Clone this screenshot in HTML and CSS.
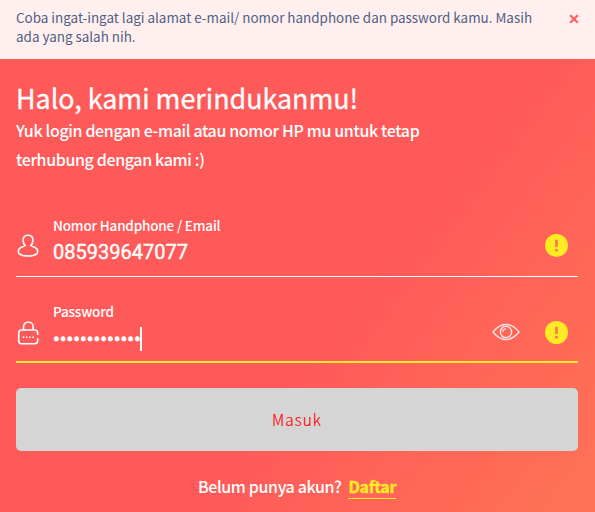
FILE: index.html
```html
<!DOCTYPE html>
<html lang="id">
<head>
<meta charset="utf-8">
<title>Login</title>
<link rel="stylesheet" href="styles.css">
</head>
<body>
<div class="alert">
  <p class="alert-text"><span>Coba ingat-ingat lagi alamat e-mail/ nomor handphone dan password kamu. Masih</span><br><span>ada yang salah nih.</span></p>
  <svg class="close" viewBox="0 0 10 10"><path d="M1.200 1.200l7.600 7.600M8.800 1.200L1.200 8.800"/></svg>
</div>
<main class="login">
  <h1 class="title"><span>Halo, kami merindukanmu!</span></h1>
  <p class="subtitle"><span>Yuk login dengan e-mail atau nomor HP mu untuk tetap</span><br><span>terhubung dengan kami :)</span></p>
  <div class="field">
    <svg class="field-icon" viewBox="0 0 24 26"><path d="M9.200 12.500C7.800 11.300 7.100 9.300 7.100 7.200 7.100 4 9 2.300 12 2.300s4.900 1.700 4.900 4.900c0 2.100-.7 4.100-2.100 5.300 1.500 1.200 3.300 1.500 4.700 2.200 1.700.8 2.200 2 2.200 3.600 0 1-.1 1.700-.8 2.300-2 1.600-5.300 2.400-8.900 2.400s-6.900-.8-8.900-2.400c-.7-.6-.8-1.300-.8-2.300 0-1.600.5-2.800 2.200-3.600 1.400-.7 3.200-1 4.700-2.200z"/></svg>
    <div class="field-body">
      <span class="label">Nomor Handphone / Email</span>
      <span class="value">085939647077</span>
    </div>
    <svg class="warn" viewBox="0 0 23 23"><circle cx="11.500" cy="11.500" r="11.500"/><path d="M10.200 5.800h2.600v7.200h-2.600zM10.200 15h2.600v2.400h-2.600z"/></svg>
  </div>
  <div class="field field-active">
    <svg class="field-icon" viewBox="0 0 24 26"><path d="M7.500 10V6.800a4.800 4.800 0 0 1 9.600 0V10M21.700 14.500v-1.500a3 3 0 0 0-3-3h-13a3 3 0 0 0-3 3v7.700a3 3 0 0 0 3 3h13a3 3 0 0 0 3-3v-2"/><path class="pins" d="M7.500 17.200h0M10.700 17.200h0M13.900 17.200h0M17.100 17.200h0"/></svg>
    <div class="field-body">
      <span class="label">Password</span>
      <span class="value masked">•••••••••••••</span>
    </div>
    <svg class="eye" viewBox="0 0 28 18"><path d="M1 9Q7 1.500 14 1.500T27 9Q21 16.500 14 16.500T1 9z"/><circle cx="14" cy="9" r="5.600"/><path d="M10.800 9A3.200 3.200 0 0 1 14 5.800"/></svg>
    <svg class="warn" viewBox="0 0 23 23"><circle cx="11.500" cy="11.500" r="11.500"/><path d="M10.200 5.800h2.600v7.200h-2.600zM10.200 15h2.600v2.400h-2.600z"/></svg>
  </div>
  <button class="submit">Masuk</button>
  <p class="signup"><span class="signup-text">Belum punya akun?</span><a class="signup-link">Daftar</a></p>
</main>
</body>
</html>
```
FILE: styles.css
```css
* { box-sizing: border-box; margin: 0; padding: 0; }
body {
  display: flex;
  flex-direction: column;
  height: 512px;
  overflow: hidden;
  font-family: "Noto Sans CJK SC", sans-serif;
  color: #fff;
}
.alert {
  display: flex;
  justify-content: space-between;
  height: 59px;
  padding: 8px 16px;
  background: #ffefee;
  color: #515f85;
}
.alert-text { font-size: 13.43px; line-height: 19px; white-space: nowrap; }
.close { width: 10px; height: 10px; margin-top: 6px; fill: none; stroke: #ff5a5a; stroke-width: 2; }
.login {
  flex: 1;
  padding: 19px 17px 0 16px;
  background: linear-gradient(127deg, #ff5a5a 0%, #ff5a5a 57%, #ff7355 100%);
}
.title { font-size: 26.85px; font-weight: 400; line-height: 40px; white-space: nowrap; -webkit-text-stroke: 0.3px #fff; }
.subtitle { height: 58px; margin-bottom: 38px; font-size: 16px; font-weight: 500; letter-spacing: -0.36px; line-height: 29px; white-space: nowrap; margin-top: -2px; }
.field { display: flex; height: 65px; border-bottom: 1px solid #fff; }
.field-active { height: 66px; margin-top: 20px; border-bottom: 2px solid #ffeb2b; }
.field-icon { width: 24px; height: 26px; margin: 21px 13px 0 0; fill: none; stroke: #fff; stroke-width: 1.6; stroke-linecap: round; }
.field-active .field-icon { margin-top: 23px; }
.pins { stroke-width: 1.7; }
.field-body { display: flex; flex: 1; flex-direction: column; }
.label { height: 26px; font-size: 13.5px; font-weight: 500; letter-spacing: -0.18px; line-height: 26px; white-space: nowrap; }
.field-active .label { position: relative; top: 1px; }
.value { font-family: Roboto, sans-serif; font-size: 20px; line-height: 28px; -webkit-text-stroke: 0.4px #fff; }
.masked { width: 89px; height: 24px; margin-top: 4px; border-right: 2px solid #fff; font-size: 20px; line-height: 24px; white-space: nowrap; -webkit-text-stroke: 0.7px #fff; }
.eye { width: 28px; height: 18px; margin: 26px 25px 0 0; fill: none; stroke: #ffe9e6; stroke-width: 1.3; }
.warn { width: 23px; height: 23px; margin: 22px 10px 0 0; fill: #ffeb24; }
.field-active .warn { margin-top: 24px; }
.warn path { fill: #ff7159; }
.submit {
  display: block;
  width: 100%;
  height: 63px;
  margin-top: 25px;
  padding-bottom: 2px;
  border: 0;
  border-radius: 5px;
  background: #d5d5d5;
  color: #f00;
  font-family: inherit;
  font-size: 15.5px;
  font-weight: 300;
  letter-spacing: 1px;
  -webkit-text-stroke: 0.15px #f00;
}
.signup { display: flex; justify-content: center; gap: 7px; margin-top: 24px; font-size: 16px; line-height: 22px; }
.signup-text { font-weight: 500; letter-spacing: -0.38px; }
.signup-link { height: 24px; border-bottom: 1px solid #ffeb24; color: #ffeb24; font-weight: 700; letter-spacing: -0.35px; -webkit-text-stroke: 0.4px #ffeb24; }
```
